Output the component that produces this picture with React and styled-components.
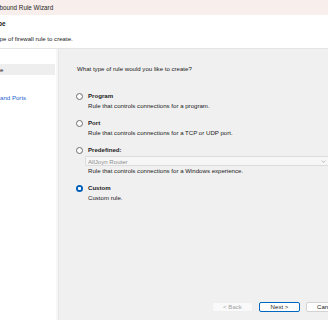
import styled, { createGlobalStyle } from "styled-components";

const GlobalStyle = createGlobalStyle`
  html, body {
    margin: 0;
    padding: 0;
    overflow: hidden;
    background: #ffffff;
  }
  body {
    font-family: "Liberation Sans", Arial, sans-serif;
    color: #1b1b1b;
  }
`;

const Frame = styled.div`
  width: 328px;
  height: 320px;
  overflow: hidden;
`;

const Window = styled.div`
  display: flex;
  flex-direction: column;
  width: 400px;
  height: 320px;
  margin-left: -40px;
`;

const TitleBar = styled.div`
  display: flex;
  align-items: center;
  gap: 7px;
  height: 15px;
  padding-left: 5px;
  background: #f8eeeb;
  font-size: 6.3px;
  color: #1f1f1f;
`;

const Header = styled.div`
  display: flex;
  flex-direction: column;
  gap: 5px;
  height: 34px;
  box-sizing: border-box;
  padding-top: 4px;
  background: #ffffff;
  border-bottom: 1px solid #e4e4e4;
`;

const HeaderTitle = styled.div`
  padding-left: 15px;
  font-size: 6.5px;
  font-weight: 700;
  line-height: 10px;
`;

const HeaderSub = styled.div`
  padding-left: 3px;
  font-size: 6.1px;
  line-height: 10px;
`;

const Body = styled.div`
  display: flex;
  flex: 1;
  min-height: 0;
`;

const StepList = styled.ul`
  display: flex;
  flex-direction: column;
  gap: 3px;
  width: 96px;
  margin: 0;
  padding: 15px 0 0;
  list-style: none;
  background: #ffffff;
  overflow: hidden;
`;

const Step = styled.li`
  height: 11px;
  margin-right: 1px;
  padding-left: 16px;
  font-size: 6.1px;
  line-height: 11px;
  white-space: nowrap;
  color: ${(p) => (p.$active ? "#1b1b1b" : "#2366cf")};
  background: ${(p) => (p.$active ? "#eeeeee" : "transparent")};
`;

const Panel = styled.div`
  display: flex;
  flex-direction: column;
  flex: 1;
  background: #f0f0f0;
  box-shadow: inset 2px 0 #f6f6f6, inset 3px 0 #e6e6e6;
`;

const Content = styled.div`
  display: flex;
  flex-direction: column;
  padding: 15px 30px 0 20px;
  font-size: 6.1px;
`;

const Question = styled.div`
  padding-left: 1px;
  line-height: 10px;
  margin-bottom: 17px;
`;

const Options = styled.div`
  display: flex;
  flex-direction: column;
  gap: 7px;
`;

const Option = styled.div`
  display: flex;
  flex-direction: column;
`;

const RadioRow = styled.label`
  display: flex;
  align-items: center;
  gap: 5px;
  height: 10px;
`;

const Radio = styled.span`
  width: 7px;
  height: 7px;
  box-sizing: border-box;
  border-radius: 50%;
  border: ${(p) => (p.$checked ? "none" : "1px solid #6e6e6e")};
  background: ${(p) =>
    p.$checked
      ? "radial-gradient(circle, #ffffff 0 1.3px, #005fb8 1.8px)"
      : "#ffffff"};
`;

const OptionLabel = styled.span`
  font-weight: 700;
  line-height: 10px;
`;

const OptionDesc = styled.div`
  padding-left: 12px;
  line-height: 10px;
`;

const Select = styled.div`
  display: flex;
  align-items: center;
  justify-content: space-between;
  height: 10px;
  box-sizing: border-box;
  margin: 1px 0 0 9px;
  padding: 0 3px 0 2px;
  border: 1px solid #dcdcdc;
  border-radius: 1px;
  background: #f6f6f6;
  color: #8e8e8e;
`;

const ButtonBar = styled.div`
  display: flex;
  justify-content: flex-end;
  gap: 6px;
  margin-top: auto;
  padding: 0 13px 8px 0;
`;

const Button = styled.button`
  width: 41px;
  height: 10px;
  padding: 0;
  box-sizing: border-box;
  border-radius: 2px;
  font-family: inherit;
  font-size: 6.1px;
  line-height: 1;
  border: 1px solid
    ${(p) =>
      p.$primary ? "#0067c0" : p.disabled ? "#efefef" : "#d3d3d3"};
  background: ${(p) => (p.disabled ? "#f9f9f9" : "#fdfdfd")};
  color: ${(p) => (p.disabled ? "#a3a3a3" : "#1b1b1b")};
`;

const steps = [
  "Rule Type",
  "Program",
  "Protocol and Ports",
  "Scope",
  "Action",
  "Profile",
  "Name",
];

const options = [
  { label: "Program", desc: "Rule that controls connections for a program." },
  { label: "Port", desc: "Rule that controls connections for a TCP or UDP port." },
  {
    label: "Predefined:",
    desc: "Rule that controls connections for a Windows experience.",
    select: "AllJoyn Router",
  },
  { label: "Custom", desc: "Custom rule.", checked: true },
];

const App = () => {
  return (
    <Frame>
      <GlobalStyle />
      <Window>
        <TitleBar>
          <svg width="8" height="8" viewBox="0 0 8 8">
            <rect x="0.5" y="0.5" width="7" height="7" fill="#c0504d" />
          </svg>
          New Inbound Rule Wizard
        </TitleBar>
        <Header>
          <HeaderTitle>Rule Type</HeaderTitle>
          <HeaderSub>Specify the type of firewall rule to create.</HeaderSub>
        </Header>
        <Body>
          <StepList>
            {steps.map((s, i) => (
              <Step key={s} $active={i === 0}>
                {s}
              </Step>
            ))}
          </StepList>
          <Panel>
            <Content>
              <Question>What type of rule would you like to create?</Question>
              <Options>
                {options.map((o) => (
                  <Option key={o.label}>
                    <RadioRow>
                      <Radio $checked={o.checked} />
                      <OptionLabel>{o.label}</OptionLabel>
                    </RadioRow>
                    {o.select && (
                      <Select>
                        <span>{o.select}</span>
                        <svg width="5" height="5" viewBox="0 0 6 6">
                          <path
                            d="M1 2l2 2 2-2"
                            fill="none"
                            stroke="#9a9a9a"
                            strokeWidth="0.8"
                          />
                        </svg>
                      </Select>
                    )}
                    <OptionDesc>{o.desc}</OptionDesc>
                  </Option>
                ))}
              </Options>
            </Content>
            <ButtonBar>
              <Button disabled>&lt; Back</Button>
              <Button $primary>Next &gt;</Button>
              <Button>Cancel</Button>
            </ButtonBar>
          </Panel>
        </Body>
      </Window>
    </Frame>
  );
};

export default App;
